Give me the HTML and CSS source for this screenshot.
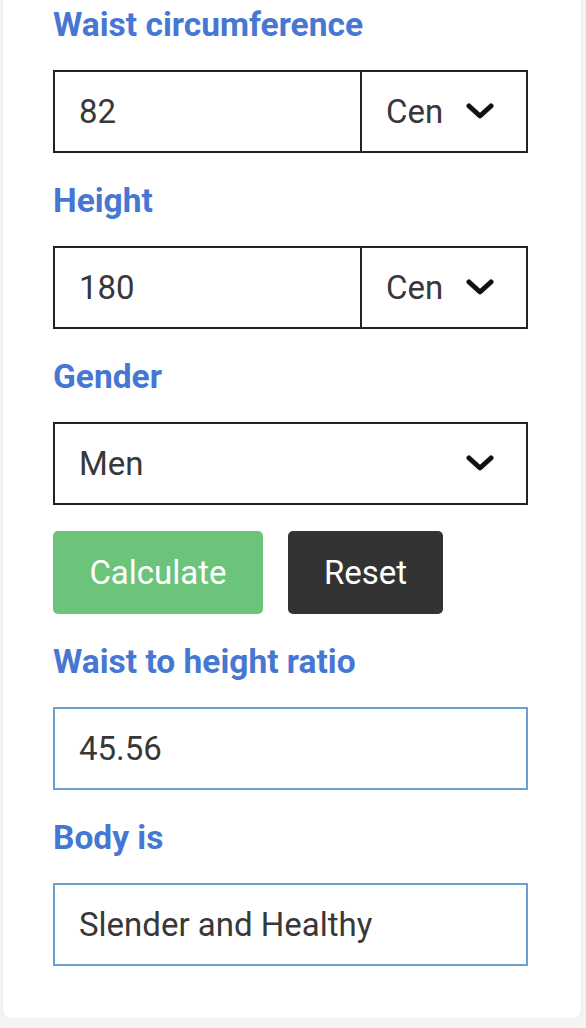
FILE: index.html
```html
<!DOCTYPE html>
<html lang="en">
<head>
    <meta charset="UTF-8">
    <meta name="viewport" content="width=device-width, initial-scale=1.0">
    <title>Waist to Height Ratio</title>
    <link rel="stylesheet" href="styles.css">
</head>
<body>
    <div class="card">
        <label class="field-label">Waist circumference</label>
        <div class="field-row">
            <input class="field-input" type="text" value="82">
            <div class="unit-select">
                <span>Cen</span>
                <svg class="chevron" viewBox="0 0 28 17"><polyline points="3,3 14,13 25,3"/></svg>
            </div>
        </div>

        <label class="field-label">Height</label>
        <div class="field-row">
            <input class="field-input" type="text" value="180">
            <div class="unit-select">
                <span>Cen</span>
                <svg class="chevron" viewBox="0 0 28 17"><polyline points="3,3 14,13 25,3"/></svg>
            </div>
        </div>

        <label class="field-label">Gender</label>
        <div class="field-row gender">
            <span>Men</span>
            <svg class="chevron" viewBox="0 0 28 17"><polyline points="3,3 14,13 25,3"/></svg>
        </div>

        <div class="buttons">
            <button class="btn btn-calc">Calculate</button>
            <button class="btn btn-reset">Reset</button>
        </div>

        <label class="field-label">Waist to height ratio</label>
        <div class="result">45.56</div>

        <label class="field-label">Body is</label>
        <div class="result">Slender and Healthy</div>
    </div>
</body>
</html>
```

FILE: styles.css
```css
body {
    margin: 0;
    background: #f4f4f4;
    font-family: Roboto, "Liberation Sans", sans-serif;
}

.card {
    margin-left: 3px;
    width: 578px;
    box-sizing: border-box;
    background: #fff;
    border-radius: 0 0 8px 8px;
    box-shadow: 0 1px 4px rgba(0,0,0,0.06);
    padding: 6px 53px 52px 50px;
}

.field-label {
    display: block;
    color: #4677d2;
    font-weight: 700;
    font-size: 33.5px;
    line-height: 38px;
    margin-top: 29px;
    margin-bottom: 26px;
}
.field-label:first-child {
    margin-top: 0;
}

.field-row {
    display: flex;
    height: 83px;
    box-sizing: border-box;
    border: 2px solid #222;
    font-size: 33px;
    color: #383838;
}

.field-input {
    flex: 1;
    min-width: 0;
    border: none;
    outline: none;
    padding: 0 0 0 24px;
    font-family: inherit;
    font-size: 33px;
    color: #383838;
    background: transparent;
}

.unit-select {
    width: 166px;
    border-left: 2px solid #222;
    display: flex;
    align-items: center;
    justify-content: space-between;
    padding: 0 32px 0 24px;
    box-sizing: border-box;
}

.gender {
    align-items: center;
    justify-content: space-between;
    padding: 0 32px 0 24px;
}

.chevron {
    width: 28px;
    height: 17px;
    fill: none;
    stroke: #111;
    stroke-width: 5;
    stroke-linecap: round;
    stroke-linejoin: round;
}

.buttons {
    display: flex;
    gap: 25px;
    margin-top: 26px;
}

.btn {
    height: 83px;
    padding: 0;
    border: none;
    border-radius: 5px;
    color: #fff;
    font-family: inherit;
    font-size: 33px;
}
.btn-calc {
    background: #6cc47a;
    width: 210px;
}
.btn-reset {
    background: #333;
    width: 155px;
}

.result {
    height: 83px;
    box-sizing: border-box;
    border: 2px solid #6a9fd0;
    display: flex;
    align-items: center;
    padding-left: 24px;
    font-size: 33px;
    color: #383838;
}
```
